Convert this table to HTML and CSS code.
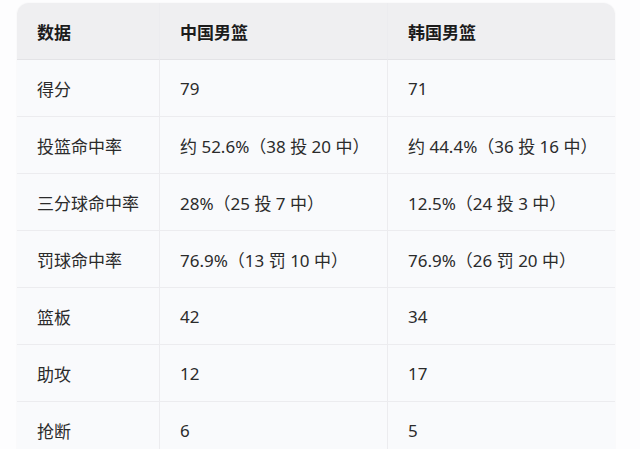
FILE: index.html
```html
<!DOCTYPE html>
<html lang="zh">
<head>
<meta charset="utf-8">
<link rel="stylesheet" href="styles.css">
</head>
<body>
<div class="page">
  <table class="stats">
    <thead>
      <tr><th>数据</th><th>中国男篮</th><th>韩国男篮</th></tr>
    </thead>
    <tbody>
      <tr><td>得分</td><td>79</td><td>71</td></tr>
      <tr><td>投篮命中率</td><td>约 52.6%（38 投 20 中）</td><td>约 44.4%（36 投 16 中）</td></tr>
      <tr><td>三分球命中率</td><td>28%（25 投 7 中）</td><td>12.5%（24 投 3 中）</td></tr>
      <tr><td>罚球命中率</td><td>76.9%（13 罚 10 中）</td><td>76.9%（26 罚 20 中）</td></tr>
      <tr><td>篮板</td><td>42</td><td>34</td></tr>
      <tr><td>助攻</td><td>12</td><td>17</td></tr>
      <tr><td>抢断</td><td>6</td><td>5</td></tr>
    </tbody>
  </table>
</div>
</body>
</html>
```
FILE: styles.css
```css
html, body {
  margin: 0;
  padding: 0;
  background: #fdfdfe;
  overflow: hidden;
}
.page {
  padding: 3px 0 0 17px;
}
.stats {
  width: 598px;
  border-collapse: separate;
  border-spacing: 0;
  table-layout: fixed;
  font-family: "Noto Sans", "Noto Sans CJK SC", sans-serif;
  font-size: 17px;
  color: #2b2b2b;
  background: #f9fafc;
  border-radius: 12px 12px 0 0;
  box-shadow: 0 0 2px rgba(0,0,0,0.06);
}
.stats th, .stats td {
  height: 57px;
  box-sizing: border-box;
  padding: 0 0 0 20px;
  text-align: left;
  vertical-align: middle;
  border-bottom: 1px solid #ececef;
  border-right: 1px solid #ececef;
  white-space: nowrap;
}
.stats th:last-child, .stats td:last-child {
  border-right: none;
}
.stats th:nth-child(1), .stats td:nth-child(1) { width: 143px; }
.stats th:nth-child(2), .stats td:nth-child(2) { width: 228px; }
.stats thead th {
  background: #efeff1;
  font-weight: 700;
  color: #1c1c1c;
  border-bottom: 1px solid #e3e3e6;
}
.stats thead th:first-child { border-top-left-radius: 12px; }
.stats thead th:last-child { border-top-right-radius: 12px; }
```
